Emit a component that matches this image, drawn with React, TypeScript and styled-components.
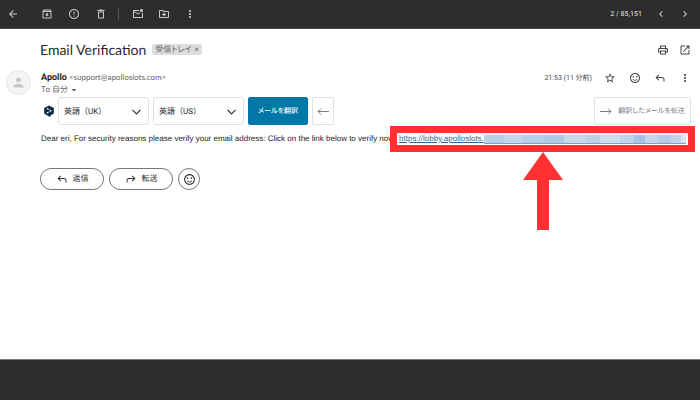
import React from 'react';
import styled, { createGlobalStyle } from 'styled-components';
import {
  MdArrowBack,
  MdArrowDropDown,
  MdChevronLeft,
  MdChevronRight,
  MdErrorOutline,
  MdMoreVert,
  MdOpenInNew,
  MdOutlineArchive,
  MdOutlineDelete,
  MdOutlineDriveFileMove,
  MdOutlineMarkEmailUnread,
  MdOutlinePrint,
  MdOutlineSentimentSatisfied,
  MdPerson,
  MdStarBorder,
} from 'react-icons/md';

const GlobalStyle = createGlobalStyle`
  *, *::before, *::after { box-sizing: border-box; }
  body {
    margin: 0;
    background: #fff;
    color: #222;
    font-family: Roboto, "Noto Sans CJK JP", sans-serif;
    font-size: 8px;
    text-rendering: geometricPrecision;
  }
  button, select { font: inherit; color: inherit; margin: 0; text-rendering: inherit; }
  h1, p { margin: 0; font-weight: 400; }
`;

const Page = styled.div`
  min-height: 100vh;
  display: flex;
  flex-direction: column;
`;

const Toolbar = styled.header`
  display: flex;
  align-items: center;
  height: 29px;
  padding: 0 8px 0 5px;
  background: #2d2d2d;
  border-bottom: 1px solid #484848;
  color: #c9c9c9;
`;

const ToolGroup = styled.div<{ $gap: number; $start?: number }>`
  display: flex;
  align-items: center;
  gap: ${(p) => p.$gap}px;
  margin-left: ${(p) => p.$start ?? 0}px;
`;

const Divider = styled.span`
  width: 1px;
  height: 12px;
  margin-left: 10px;
  background: #555;
`;

const Counter = styled.span`
  margin-left: auto;
  font-size: 7px;
  font-weight: 500;
`;

const DateText = styled.span`
  font-size: 7px;
`;

const IconButton = styled.button`
  display: flex;
  align-items: center;
  justify-content: center;
  width: 15px;
  height: 15px;
  padding: 0;
  border: 0;
  background: none;
  font-size: 12px;
`;

const Main = styled.main`
  flex: 1;
  padding: 12px 8px 0 0;
`;

const TitleRow = styled.div`
  display: flex;
  align-items: center;
  gap: 6px;
  height: 17px;
  padding-left: 40px;
`;

const Title = styled.h1`
  font-family: Lato, sans-serif;
  font-size: 14px;
  line-height: 17px;
  color: #2a2a2a;
`;

const Label = styled.span`
  display: flex;
  align-items: center;
  gap: 3px;
  height: 11px;
  padding: 0 3px;
  border-radius: 2px;
  background: #ddd;
  color: #666;
  line-height: 11px;
  font-feature-settings: "palt";
`;

const LabelClose = styled.button`
  padding: 0;
  border: 0;
  background: none;
  line-height: 11px;
`;

const Actions = styled.div<{ $gap: number }>`
  display: flex;
  align-items: center;
  gap: ${(p) => p.$gap}px;
  margin-left: auto;
  color: #444;
`;

const SenderRow = styled.div`
  display: flex;
  align-items: flex-start;
  margin-top: 12px;
  height: 26px;
`;

const Avatar = styled.div`
  display: flex;
  align-items: center;
  justify-content: center;
  width: 25px;
  height: 25px;
  margin: 0 10px 0 6px;
  border: 1px solid #e6e6e6;
  border-radius: 50%;
  background: #f4f4f4;
  color: #c8c8c8;
  font-size: 15px;
`;

const Sender = styled.div`
  padding-top: 1px;
  line-height: 12px;
  color: #666;
`;

const Name = styled.strong`
  font-size: 9px;
  font-weight: 700;
  color: #1f1f1f;
`;

const Address = styled.span`
  font-family: Lato, sans-serif;
`;

const Recipient = styled.div`
  display: flex;
  align-items: center;
`;

const Content = styled.div`
  padding: 0 1px 0 40px;
`;

const TranslateBar = styled.div`
  display: flex;
  align-items: center;
  gap: 4px;
  margin-top: 1px;
  padding-left: 4px;
`;

const Logo = styled.svg`
  width: 10px;
  height: 12px;
`;

const SelectBox = styled.label`
  position: relative;
  display: block;
  width: 91px;
  height: 28px;
`;

const Select = styled.select`
  appearance: none;
  width: 100%;
  height: 100%;
  padding: 0 24px 0 5px;
  border: 1px solid #e0e0e0;
  border-radius: 3px;
  background: #fff;
  color: #222;
`;

const Chevron = styled.svg`
  position: absolute;
  top: 12px;
  right: 8px;
  width: 9px;
  height: 6px;
  pointer-events: none;
`;

const BarButton = styled.button<{ $kind: 'primary' | 'plain' }>`
  display: flex;
  align-items: center;
  justify-content: center;
  gap: 6px;
  height: 28px;
  padding: 0 4px;
  border: 1px solid ${(p) => (p.$kind === 'primary' ? '#0077a6' : '#e0e0e0')};
  border-radius: 2px;
  background: ${(p) => (p.$kind === 'primary' ? '#0077a6' : '#fff')};
  color: ${(p) => (p.$kind === 'primary' ? '#fff' : '#777d84')};
  font-size: 7px;
  font-feature-settings: "palt";
  white-space: nowrap;
`;

const TranslateButton = styled(BarButton)`
  width: 60px;
  font-weight: 500;
`;

const ForwardTranslated = styled(BarButton)`
  margin-left: auto;
  min-width: 97px;
`;

const LongArrow = styled.svg`
  width: 12px;
  height: 8px;
`;

const Message = styled.div`
  display: flex;
  align-items: center;
  gap: 5px;
  margin-top: 8px;
  padding: 0 5px 0 1px;
  height: 12px;
  font-family: "Liberation Sans", Arial, sans-serif;
  line-height: 12px;
  white-space: nowrap;
`;

const LinkArea = styled.div`
  position: relative;
  display: flex;
  flex: 1;
  height: 12px;
`;

const Link = styled.a`
  display: flex;
  align-items: center;
  flex: 1;
  color: #2c6699;
`;

const Mosaic = styled.span`
  display: flex;
  flex: 1;
  height: 9px;
  border-bottom: 1px solid #7f9fc4;
`;

const Tile = styled.span<{ $grow: number; $color: string }>`
  flex: ${(p) => p.$grow};
  background: ${(p) => p.$color};
`;

const Highlight = styled.div`
  position: absolute;
  inset: -7px -9px;
  border: 7px solid #ff3131;
  pointer-events: none;
`;

const Pointer = styled.svg`
  position: absolute;
  top: 19px;
  left: 50%;
  width: 40px;
  height: 78px;
  margin-left: -20px;
`;

const Replies = styled.div`
  display: flex;
  gap: 5px;
  margin-top: 23px;
`;

const Pill = styled.button`
  display: flex;
  align-items: center;
  justify-content: center;
  gap: 5px;
  min-width: 64px;
  height: 22px;
  padding: 0;
  border: 1px solid #777;
  border-radius: 11px;
  background: #fff;
  color: #333;
  line-height: 12px;
`;

const RoundButton = styled(Pill)`
  min-width: 22px;
  font-size: 13px;
`;

const Footer = styled.footer`
  height: 41px;
  background: #2d2d2d;
  border-top: 1px solid #777;
`;

const TurnArrow = ({ flip = false }: { flip?: boolean }) => (
  <svg width="12" height="12" viewBox="0 -960 960 960" fill="currentColor" aria-hidden="true">
    <path
      transform={flip ? 'translate(960 0) scale(-1 1)' : undefined}
      d="M760-200v-160q0-50-35-85t-85-35H273l144 144-57 56-240-240 240-240 57 56-144 144h367q83 0 141.5 58.5T840-360v160h-80Z"
    />
  </svg>
);

const Arrow = ({ left = false }: { left?: boolean }) => (
  <LongArrow viewBox="0 0 12 8" fill="none" stroke="currentColor" aria-hidden="true">
    <path d={left ? 'M12 4.5H1M4 1.5L1 4.5L4 7.5' : 'M0 4.5H11M8 1.5L11 4.5L8 7.5'} />
  </LongArrow>
);

const LanguageSelect = ({ label, value }: { label: string; value: string }) => (
  <SelectBox>
    <Select aria-label={label} defaultValue={value}>
      <option>{value}</option>
    </Select>
    <Chevron viewBox="0 0 9 6" fill="none" stroke="#333" strokeWidth="1.2">
      <path d="M0.5 0.8L4.5 4.8L8.5 0.8" />
    </Chevron>
  </SelectBox>
);

const tiles: [number, string][] = [
  [20, '#b9d0e9'],
  [20, '#c2d5eb'],
  [22, '#b8cee8'],
  [19, '#b3cae6'],
  [22, '#c9d9ec'],
  [14, '#bdd1e9'],
  [20, '#cddcee'],
  [15, '#bfd3ea'],
  [11, '#a9c3e4'],
  [14, '#c5d6ec'],
  [12, '#b6cbe7'],
  [10, '#c2d3ea'],
  [5, '#d8e3f1'],
];

export default function App() {
  return (
    <Page>
      <GlobalStyle />
      <Toolbar>
        <IconButton aria-label="戻る"><MdArrowBack /></IconButton>
        <ToolGroup $gap={12} $start={19}>
          <IconButton aria-label="アーカイブ"><MdOutlineArchive /></IconButton>
          <IconButton aria-label="迷惑メールを報告"><MdErrorOutline /></IconButton>
          <IconButton aria-label="削除"><MdOutlineDelete /></IconButton>
        </ToolGroup>
        <Divider />
        <ToolGroup $gap={11} $start={11}>
          <IconButton aria-label="未読にする"><MdOutlineMarkEmailUnread /></IconButton>
          <IconButton aria-label="移動"><MdOutlineDriveFileMove /></IconButton>
          <IconButton aria-label="その他"><MdMoreVert /></IconButton>
        </ToolGroup>
        <Counter>2 / 85,151</Counter>
        <ToolGroup $gap={9} $start={11}>
          <IconButton aria-label="前へ"><MdChevronLeft /></IconButton>
          <IconButton aria-label="次へ"><MdChevronRight /></IconButton>
        </ToolGroup>
      </Toolbar>

      <Main>
        <TitleRow>
          <Title>Email Verification</Title>
          <Label>
            受信トレイ
            <LabelClose aria-label="ラベルを削除">×</LabelClose>
          </Label>
          <Actions $gap={7}>
            <IconButton aria-label="印刷"><MdOutlinePrint /></IconButton>
            <IconButton aria-label="新しいウィンドウ"><MdOpenInNew /></IconButton>
          </Actions>
        </TitleRow>

        <SenderRow>
          <Avatar><MdPerson /></Avatar>
          <Sender>
            <div><Name>Apollo</Name> <Address>&lt;support@apolloslots.com&gt;</Address></div>
            <Recipient>To 自分 <MdArrowDropDown size={12} /></Recipient>
          </Sender>
          <Actions $gap={10}>
            <DateText>21:53 (11 分前)</DateText>
            <IconButton aria-label="スター"><MdStarBorder /></IconButton>
            <IconButton aria-label="リアクション"><MdOutlineSentimentSatisfied /></IconButton>
            <IconButton aria-label="返信"><TurnArrow /></IconButton>
            <IconButton aria-label="その他"><MdMoreVert /></IconButton>
          </Actions>
        </SenderRow>

        <Content>
          <TranslateBar>
            <Logo viewBox="0 0 10 12" aria-hidden="true">
              <path d="M5 0.4L9.8 3V8.6L6.4 10.5V12L4.6 11.3L0.2 8.6V3Z" fill="#0f2b46" />
              <path d="M3.6 3.8L6.8 5.8L3.6 7.8" fill="none" stroke="#fff" strokeWidth="0.6" />
              <circle cx="3.6" cy="3.8" r="0.8" fill="#fff" />
              <circle cx="6.8" cy="5.8" r="0.8" fill="#fff" />
              <circle cx="3.6" cy="7.8" r="0.8" fill="#fff" />
            </Logo>
            <LanguageSelect label="翻訳元の言語" value="英語（UK）" />
            <LanguageSelect label="翻訳先の言語" value="英語（US）" />
            <TranslateButton $kind="primary">メールを翻訳</TranslateButton>
            <BarButton $kind="plain" aria-label="元に戻す"><Arrow left /></BarButton>
            <ForwardTranslated $kind="plain"><Arrow />翻訳したメールを転送</ForwardTranslated>
          </TranslateBar>

          <Message>
            <p>Dear eri, For security reasons please verify your email address: Click on the link below to verify now</p>
            <LinkArea>
              <Link href="#verify">
                https://lobby.apolloslots.
                <Mosaic>
                  {tiles.map(([grow, color], i) => (
                    <Tile key={i} $grow={grow} $color={color} />
                  ))}
                </Mosaic>
              </Link>
              <Highlight />
              <Pointer viewBox="0 0 40 78" aria-hidden="true">
                <path d="M20 0L40 28H26V78H14V28H0Z" fill="#ff3131" />
              </Pointer>
            </LinkArea>
          </Message>

          <Replies>
            <Pill><TurnArrow />返信</Pill>
            <Pill><TurnArrow flip />転送</Pill>
            <RoundButton aria-label="リアクションを追加"><MdOutlineSentimentSatisfied /></RoundButton>
          </Replies>
        </Content>
      </Main>
      <Footer />
    </Page>
  );
}
